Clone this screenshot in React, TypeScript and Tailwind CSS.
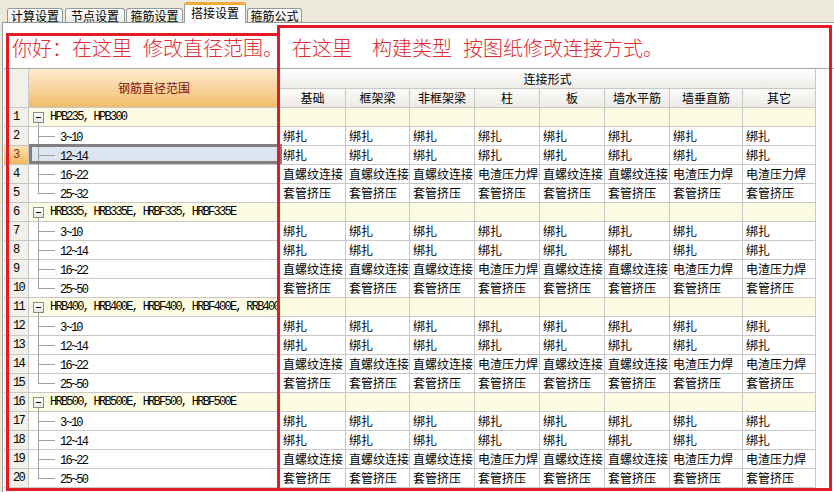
import React from 'react';

const COLS = ['w-[66px]', 'w-[64px]', 'w-[65px]', 'w-[65px]', 'w-[65px]', 'w-[65px]', 'w-[73px]', 'w-[73px]'];
const HEADS = ['基础', '框架梁', '非框架梁', '柱', '板', '墙水平筋', '墙垂直筋', '其它'];

const GROUPS = [
  { name: 'HPB235, HPB300', ranges: ['3~10', '12~14', '16~22', '25~32'] },
  { name: 'HRB335, HRB335E, HRBF335, HRBF335E', ranges: ['3~10', '12~14', '16~22', '25~50'] },
  { name: 'HRB400, HRB400E, HRBF400, HRBF400E, RRB400', ranges: ['3~10', '12~14', '16~22', '25~50'] },
  { name: 'HRB500, HRB500E, HRBF500, HRBF500E', ranges: ['3~10', '12~14', '16~22', '25~50'] },
];

const VALUES = [
  ['绑扎', '绑扎', '绑扎', '绑扎', '绑扎', '绑扎', '绑扎', '绑扎'],
  ['绑扎', '绑扎', '绑扎', '绑扎', '绑扎', '绑扎', '绑扎', '绑扎'],
  ['直螺纹连接', '直螺纹连接', '直螺纹连接', '电渣压力焊', '直螺纹连接', '直螺纹连接', '电渣压力焊', '电渣压力焊'],
  ['套管挤压', '套管挤压', '套管挤压', '套管挤压', '套管挤压', '套管挤压', '套管挤压', '套管挤压'],
];

const MONO = "font-['Liberation_Mono',monospace] text-[12px] tracking-[-1.75px]";
const CELL = 'shrink-0 border-r border-b border-[#c8c8c8]';

function NumCell({ num, selected }: { num: number; selected?: boolean }) {
  return (
    <div
      className={`w-[25px] ${CELL} pl-[9px] leading-[18px] ${MONO} ${
        selected ? 'bg-linear-to-b from-[#fde3b4] to-[#f5b65c] text-[#8b2a00]' : 'bg-[#f1f0ea] text-black'
      }`}
    >
      {num}
    </div>
  );
}

function GroupRow({ num, name }: { num: number; name: string }) {
  return (
    <div className="flex h-[19px]">
      <NumCell num={num} />
      <div className={`relative w-[251px] ${CELL} bg-[#fcfce3] flex items-center pl-[4px] overflow-hidden`}>
        <span className="w-[11px] h-[11px] shrink-0 border border-[#8c8c8c] bg-linear-to-b from-white to-[#e8e8e4] flex items-center justify-center">
          <span className="w-[5px] h-px bg-black" />
        </span>
        <span className="absolute left-[9px] top-[15px] -bottom-px w-px bg-[#a0a0a0]" />
        <span className={`ml-[6px] whitespace-nowrap leading-[18px] ${MONO}`}>{name}</span>
      </div>
      {COLS.map((c, i) => (
        <div key={i} className={`${c} ${CELL} bg-[#fcfce3]`} />
      ))}
    </div>
  );
}

function ChildRow({
  num,
  range,
  values,
  last,
  selected,
}: {
  num: number;
  range: string;
  values: string[];
  last: boolean;
  selected?: boolean;
}) {
  return (
    <div className="flex h-[19px]">
      <NumCell num={num} selected={selected} />
      <div className={`relative w-[251px] ${CELL} pl-[31px] leading-[18px] ${selected ? 'bg-[#dde5f0]' : 'bg-white'}`}>
        <span className={`absolute left-[9px] top-0 w-px bg-[#a0a0a0] ${last ? 'h-[9px]' : '-bottom-px'}`} />
        <span className="absolute left-[9px] top-[9px] w-[17px] h-px bg-[#a0a0a0]" />
        <span className={MONO}>{range}</span>
        {selected && (
          <span className="absolute -top-[2px] left-0 -right-[3px] bottom-0 border-[3px] border-[#7f7f7f]" />
        )}
      </div>
      {COLS.map((c, i) => (
        <div key={i} className={`${c} ${CELL} pl-[3px] leading-[18px] whitespace-nowrap overflow-hidden bg-white`}>
          {values[i]}
        </div>
      ))}
    </div>
  );
}

function Tab({ label, w, active, ml }: { label: string; w: string; active?: boolean; ml: string }) {
  if (active) {
    return (
      <div
        className={`${w} ${ml} relative z-10 -mb-px h-[21px] border border-b-0 border-[#919b9c] border-t-[3px] border-t-[#f2a93b] rounded-t-[3px] bg-white text-center leading-[16px]`}
      >
        {label}
      </div>
    );
  }
  return (
    <div
      className={`${w} ${ml} h-[14px] border border-b-0 border-[#919b9c] rounded-t-[3px] bg-linear-to-b from-white to-[#ecebe5] text-center leading-[13px]`}
    >
      {label}
    </div>
  );
}

export default function App() {
  const rows: React.ReactNode[] = [];
  let n = 0;
  GROUPS.forEach((g, gi) => {
    n += 1;
    rows.push(<GroupRow key={`g${gi}`} num={n} name={g.name} />);
    g.ranges.forEach((r, i) => {
      n += 1;
      rows.push(
        <ChildRow
          key={`c${gi}-${i}`}
          num={n}
          range={r}
          values={VALUES[i]}
          last={i === g.ranges.length - 1}
          selected={n === 3}
        />
      );
    });
  });

  return (
    <div className="relative w-[834px] h-[492px] overflow-hidden bg-[#ece9d8] text-[12px] text-black font-['Noto_Sans_CJK_SC',sans-serif]">
      {/* Tabs */}
      <div className="flex items-end h-[22px] pl-[7px]">
        <Tab label="计算设置" w="w-[56px]" ml="ml-0" />
        <Tab label="节点设置" w="w-[60px]" ml="ml-[2px]" />
        <Tab label="箍筋设置" w="w-[57px]" ml="ml-px" />
        <Tab label="搭接设置" w="w-[62px]" ml="ml-px" active />
        <Tab label="箍筋公式" w="w-[55px]" ml="ml-px" />
      </div>

      {/* Panel */}
      <div className="ml-[2px] h-[470px] border-l border-t border-[#919b9c] bg-white">
        <div className="h-[45px]" />
        <div className="ml-px">
          {/* Header */}
          <div className="flex h-[40px] border-t border-[#a8a8a8]">
            <div className={`w-[25px] ${CELL} bg-[#f1f0ea]`} />
            <div
              className={`w-[251px] ${CELL} bg-linear-to-b from-[#fdeccf] to-[#f2bd6a] flex items-center justify-center text-[#7a1010]`}
            >
              钢筋直径范围
            </div>
            <div className="w-[536px] shrink-0 flex flex-col">
              <div className="h-[20px] border-r border-b border-[#c8c8c8] bg-linear-to-b from-white to-[#ecebe6] flex items-center justify-center">
                连接形式
              </div>
              <div className="flex h-[19px]">
                {COLS.map((c, i) => (
                  <div
                    key={i}
                    className={`${c} ${CELL} bg-linear-to-b from-[#fbfbf9] to-[#ecebe6] flex items-center justify-center`}
                  >
                    {HEADS[i]}
                  </div>
                ))}
              </div>
            </div>
          </div>
          {rows}
        </div>
      </div>

      {/* Red annotation boxes */}
      <div className="absolute left-[6px] top-[33px] w-[274px] h-[458px] border-[3px] border-[#e31b23] pointer-events-none">
        <div className="pt-[2px] pl-[3px] text-[20px] leading-[20px] text-[#e02a32] font-light whitespace-nowrap">
          你好：在这里<span className="ml-[11px]">修改直径范围。</span>
        </div>
      </div>
      <div className="absolute left-[277px] top-[25px] w-[555px] h-[466px] border-[3px] border-[#e31b23] pointer-events-none">
        <div className="pt-[10px] pl-[12px] text-[20px] leading-[20px] text-[#e02a32] font-light whitespace-nowrap">
          在这里<span className="ml-[20px]">构建类型</span>
          <span className="ml-[11px]">按图纸修改连接方式。</span>
        </div>
      </div>
    </div>
  );
}
